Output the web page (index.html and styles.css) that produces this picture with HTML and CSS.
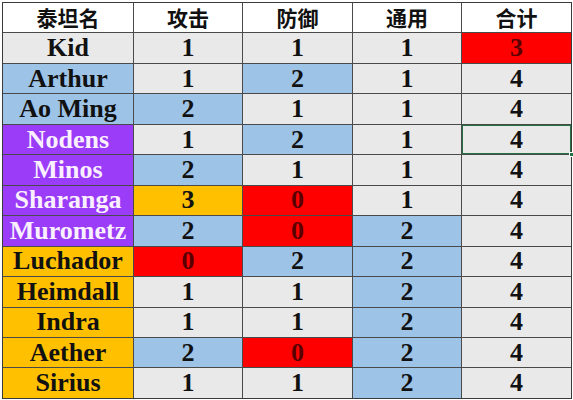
FILE: index.html
```html
<!DOCTYPE html>
<html lang="zh">
<head>
<meta charset="utf-8">
<title>泰坦</title>
<link rel="stylesheet" href="styles.css">
</head>
<body>
<div class="sheet">
  <div class="c hd">泰坦名</div><div class="c hd">攻击</div><div class="c hd">防御</div><div class="c hd">通用</div><div class="c hd">合计</div>

  <div class="c gray">Kid</div><div class="c gray">1</div><div class="c gray">1</div><div class="c gray">1</div><div class="c red">3</div>
  <div class="c blue">Arthur</div><div class="c gray">1</div><div class="c blue">2</div><div class="c gray">1</div><div class="c gray">4</div>
  <div class="c blue">Ao Ming</div><div class="c blue">2</div><div class="c gray">1</div><div class="c gray">1</div><div class="c gray">4</div>
  <div class="c purple">Nodens</div><div class="c gray">1</div><div class="c blue">2</div><div class="c gray">1</div><div class="c gray selected">4</div>
  <div class="c purple">Minos</div><div class="c blue">2</div><div class="c gray">1</div><div class="c gray">1</div><div class="c gray">4</div>
  <div class="c purple">Sharanga</div><div class="c orange">3</div><div class="c red">0</div><div class="c gray">1</div><div class="c gray">4</div>
  <div class="c purple">Murometz</div><div class="c blue">2</div><div class="c red">0</div><div class="c blue">2</div><div class="c gray">4</div>
  <div class="c orange">Luchador</div><div class="c red">0</div><div class="c blue">2</div><div class="c blue">2</div><div class="c gray">4</div>
  <div class="c orange">Heimdall</div><div class="c gray">1</div><div class="c gray">1</div><div class="c blue">2</div><div class="c gray">4</div>
  <div class="c orange">Indra</div><div class="c gray">1</div><div class="c gray">1</div><div class="c blue">2</div><div class="c gray">4</div>
  <div class="c orange">Aether</div><div class="c blue">2</div><div class="c red">0</div><div class="c blue">2</div><div class="c gray">4</div>
  <div class="c orange">Sirius</div><div class="c gray">1</div><div class="c gray">1</div><div class="c blue">2</div><div class="c gray">4</div>
</div>
</body>
</html>
```

FILE: styles.css
```css
html, body {
  margin: 0;
  padding: 0;
  background: #ffffff;
}

.sheet {
  display: grid;
  grid-template-columns: 130px 108px 109px 108px 109px;
  grid-template-rows: repeat(13, 29.46px);
  gap: 1px;
  width: max-content;
  background: #4a4a4a;
  border: 1px solid #3a3a3a;
  margin: 2px 0 0 2px;
  font-family: "Liberation Serif", "Times New Roman", serif;
  font-weight: 700;
  font-size: 26px;
  color: #111;
}

.c {
  display: flex;
  align-items: center;
  justify-content: center;
  white-space: nowrap;
  line-height: 1;
}

.hd {
  background: #ffffff;
  font-family: "Noto Sans CJK SC", "Noto Sans", sans-serif;
  font-size: 21px;
  font-weight: 700;
  color: #111;
}

.gray { background: #e9e9e9; }
.blue { background: #9dc3e6; }
.orange { background: #ffc000; }
.red { background: #ff0000; color: #5a0000; }
.purple { background: #9a3cf8; color: #fbf0ff; }

.selected {
  position: relative;
  box-shadow: inset 0 0 0 1px #217346;
}

.selected::after {
  content: "";
  position: absolute;
  right: -3px;
  bottom: -3px;
  width: 5px;
  height: 5px;
  background: #217346;
  border: 1px solid #ffffff;
  box-sizing: border-box;
}
```
